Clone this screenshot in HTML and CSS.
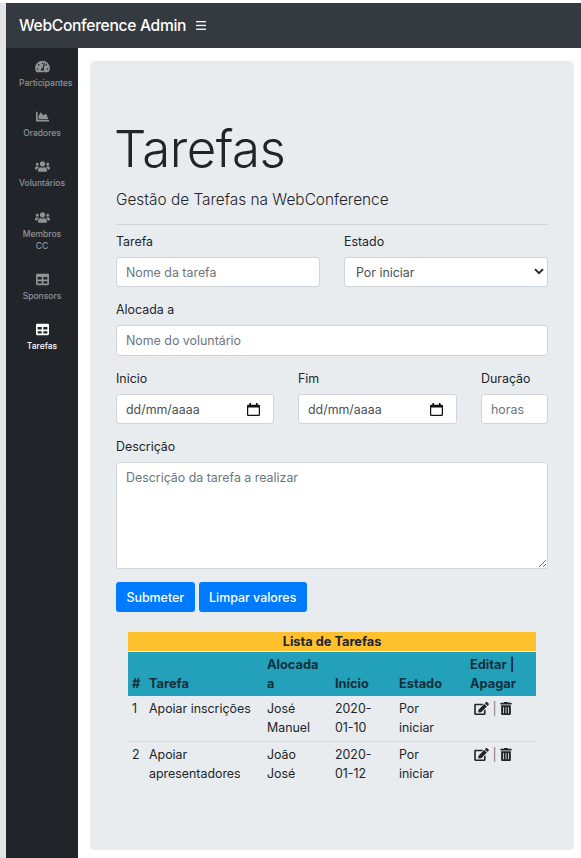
FILE: index.html
```html
<!DOCTYPE html>
<html lang="pt">
<head>
<meta charset="utf-8">
<title>WebConference Admin</title>
<link rel="stylesheet" href="styles.css">
</head>
<body>
<svg class="defs" aria-hidden="true">
  <symbol id="i-tach" viewBox="0 0 576 512"><path d="M288 32C128.94 32 0 160.94 0 320c0 52.8 14.25 102.26 39.06 144.8 5.61 9.62 16.3 15.2 27.44 15.2h443c11.14 0 21.83-5.58 27.44-15.2C561.75 422.26 576 372.8 576 320c0-159.06-128.94-288-288-288zm0 64c14.71 0 26.58 10.13 30.32 23.65-1.11 2.26-2.64 4.23-3.45 6.67l-9.22 27.67c-5.13 3.49-10.97 6.01-17.64 6.01-17.67 0-32-14.33-32-32S270.33 96 288 96zM96 384c-17.67 0-32-14.33-32-32s14.33-32 32-32 32 14.33 32 32-14.33 32-32 32zm48-160c-17.67 0-32-14.33-32-32s14.33-32 32-32 32 14.33 32 32-14.33 32-32 32zm246.77-72.41l-61.33 184C343.13 347.33 352 364.54 352 384c0 11.72-3.38 22.55-8.88 32H232.88c-5.5-9.45-8.88-20.28-8.88-32 0-33.94 26.5-61.43 59.9-63.59l61.34-184.01c4.17-12.56 17.73-19.45 30.36-15.17 12.57 4.19 19.35 17.79 15.17 30.36zm14.66 57.2l15.52-46.55c3.47-1.29 7.13-2.23 11.05-2.23 17.67 0 32 14.33 32 32s-14.33 32-32 32c-11.38-.01-20.89-6.28-26.57-15.22zM480 384c-17.67 0-32-14.33-32-32s14.33-32 32-32 32 14.33 32 32-14.33 32-32 32z"/></symbol>
  <symbol id="i-chart" viewBox="0 0 512 512"><path d="M500 384c6.6 0 12 5.4 12 12v40c0 6.6-5.4 12-12 12H12c-6.6 0-12-5.4-12-12V76c0-6.6 5.4-12 12-12h40c6.6 0 12 5.4 12 12v308h436zM372.7 159.5L288 216l-85.3-113.7c-5.1-6.8-15.5-6.3-19.9 1L96 248v104h384l-67.8-179.3c-4.7-12.4-23.4-19.6-39.5-13.2z"/></symbol>
  <symbol id="i-users" viewBox="0 0 640 512"><path d="M96 224c35.3 0 64-28.7 64-64s-28.7-64-64-64-64 28.7-64 64 28.7 64 64 64zm448 0c35.3 0 64-28.7 64-64s-28.7-64-64-64-64 28.7-64 64 28.7 64 64 64zm32 32h-64c-17.6 0-33.5 7.1-45.1 18.6 40.3 22.1 68.9 62 75.1 109.4h66c17.7 0 32-14.3 32-32v-32c0-35.3-28.7-64-64-64zm-256 0c61.9 0 112-50.1 112-112S381.9 32 320 32 208 82.1 208 144s50.1 112 112 112zm76.8 32h-8.3c-20.8 10-43.9 16-68.5 16s-47.6-6-68.5-16h-8.3C179.6 288 128 339.6 128 403.2V432c0 26.5 21.5 48 48 48h288c26.5 0 48-21.5 48-48v-28.8c0-63.6-51.6-115.2-115.2-115.2zm-223.7-13.4C161.5 263.1 145.6 256 128 256H64c-35.3 0-64 28.7-64 64v32c0 17.7 14.3 32 32 32h65.9c6.3-47.4 34.9-87.3 75.2-109.4z"/></symbol>
  <symbol id="i-table" viewBox="0 0 512 512"><path d="M464 32H48C21.49 32 0 53.49 0 80v352c0 26.51 21.49 48 48 48h416c26.51 0 48-21.49 48-48V80c0-26.51-21.49-48-48-48zM224 416H64v-96h160v96zm0-160H64v-96h160v96zm224 160H288v-96h160v96zm0-160H288v-96h160v96z"/></symbol>
  <symbol id="i-edit" viewBox="0 0 576 512"><path d="M402.6 83.2l90.2 90.2c3.8 3.8 3.8 10 0 13.8L274.4 405.6l-92.8 10.3c-12.4 1.4-22.9-9.1-21.5-21.5l10.3-92.8L388.8 83.2c3.8-3.8 10-3.8 13.8 0zm162-22.9l-48.8-48.8c-15.2-15.2-39.9-15.2-55.2 0l-35.4 35.4c-3.8 3.8-3.8 10 0 13.8l90.2 90.2c3.8 3.8 10 3.8 13.8 0l35.4-35.4c15.2-15.3 15.2-40 0-55.2zM384 346.2V448H64V128h229.8c3.2 0 6.2-1.3 8.5-3.5l40-40c7.6-7.6 2.2-20.5-8.5-20.5H48C21.5 64 0 85.5 0 112v352c0 26.5 21.5 48 48 48h352c26.5 0 48-21.5 48-48V306.2c0-10.7-12.9-16-20.5-8.5l-40 40c-2.2 2.3-3.5 5.3-3.5 8.5z"/></symbol>
  <symbol id="i-trash" viewBox="0 0 448 512"><path d="M32 464a48 48 0 0 0 48 48h288a48 48 0 0 0 48-48V128H32zm272-256a16 16 0 0 1 32 0v224a16 16 0 0 1-32 0zm-96 0a16 16 0 0 1 32 0v224a16 16 0 0 1-32 0zm-96 0a16 16 0 0 1 32 0v224a16 16 0 0 1-32 0zM432 32H312l-9.4-18.7A24 24 0 0 0 281.1 0H166.8a23.72 23.72 0 0 0-21.4 13.3L136 32H16A16 16 0 0 0 0 48v32a16 16 0 0 0 16 16h416a16 16 0 0 0 16-16V48a16 16 0 0 0-16-16z"/></symbol>
  <symbol id="i-cal" viewBox="0 0 16 16"><path d="M3 0h2v2h6V0h2v2h1.500A1.500 1.500 0 0 1 16 3.500v11a1.500 1.500 0 0 1-1.500 1.500h-13A1.500 1.500 0 0 1 0 14.500v-11A1.500 1.500 0 0 1 1.500 2H3zM1.500 5.500v9h13v-9z"/></symbol>
</svg>

<div class="app">
  <header class="navbar">
    <span class="brand">WebConference Admin</span>
    <svg class="burger" viewBox="0 0 10 9" aria-hidden="true"><rect width="10" height="1.300" y="0"/><rect width="10" height="1.300" y="3.800"/><rect width="10" height="1.300" y="7.600"/></svg>
  </header>
  <div class="body-row">
    <nav class="sidebar">
      <a class="side-link"><svg class="side-icon"><use href="#i-tach"/></svg><span class="side-text">Participantes</span></a>
      <a class="side-link"><svg class="side-icon"><use href="#i-chart"/></svg><span class="side-text">Oradores</span></a>
      <a class="side-link"><svg class="side-icon"><use href="#i-users"/></svg><span class="side-text">Voluntários</span></a>
      <a class="side-link"><svg class="side-icon"><use href="#i-users"/></svg><span class="side-text">Membros<br>CC</span></a>
      <a class="side-link"><svg class="side-icon"><use href="#i-table"/></svg><span class="side-text">Sponsors</span></a>
      <a class="side-link active"><svg class="side-icon"><use href="#i-table"/></svg><span class="side-text">Tarefas</span></a>
    </nav>
    <main class="content">
      <section class="jumbotron">
        <h1 class="title">Tarefas</h1>
        <p class="lead">Gestão de Tarefas na WebConference</p>
        <hr class="rule">
        <form class="form">
          <div class="row two">
            <div class="field"><label class="label">Tarefa</label><input class="control" placeholder="Nome da tarefa"></div>
            <div class="field"><label class="label">Estado</label>
              <div class="select-wrap">
                <select class="control select"><option>Por iniciar</option></select>
                <svg class="chevron" viewBox="0 0 10 7" aria-hidden="true"><path d="M1 1.200l4 4 4-4" fill="none" stroke="#212529" stroke-width="1.900"/></svg>
              </div>
            </div>
          </div>
          <div class="field"><label class="label">Alocada a</label><input class="control tall" placeholder="Nome do voluntário"></div>
          <div class="row dates">
            <div class="field"><label class="label">Inicio</label>
              <div class="control date"><span>dd/mm/aaaa</span><svg class="cal"><use href="#i-cal"/></svg></div>
            </div>
            <div class="field"><label class="label">Fim</label>
              <div class="control date"><span>dd/mm/aaaa</span><svg class="cal"><use href="#i-cal"/></svg></div>
            </div>
            <div class="field"><label class="label">Duração</label><input class="control" placeholder="horas"></div>
          </div>
          <div class="field"><label class="label">Descrição</label><textarea class="control area" placeholder="Descrição da tarefa a realizar"></textarea></div>
          <div class="buttons">
            <button type="button" class="btn">Submeter</button>
            <button type="button" class="btn">Limpar valores</button>
          </div>
        </form>
        <table class="table">
          <colgroup><col class="c1"><col class="c2"><col class="c3"><col class="c4"><col class="c5"><col class="c6"></colgroup>
          <thead>
            <tr class="caption-row"><th colspan="6">Lista de Tarefas</th></tr>
            <tr class="head-row"><th>#</th><th>Tarefa</th><th class="mid">Alocada a</th><th class="mid">Início</th><th class="narrow">Estado</th><th class="narrow">Editar | Apagar</th></tr>
          </thead>
          <tbody>
            <tr><td>1</td><td>Apoiar inscrições</td><td class="mid">José Manuel</td><td class="mid">2020-01-10</td><td class="narrow">Por iniciar</td><td class="actions narrow"><svg class="act edit"><use href="#i-edit"/></svg><span class="sep">|</span><svg class="act trash"><use href="#i-trash"/></svg></td></tr>
            <tr><td>2</td><td>Apoiar apresentadores</td><td class="mid">João José</td><td class="mid">2020-01-12</td><td class="narrow">Por iniciar</td><td class="actions narrow"><svg class="act edit"><use href="#i-edit"/></svg><span class="sep">|</span><svg class="act trash"><use href="#i-trash"/></svg></td></tr>
          </tbody>
        </table>
      </section>
    </main>
  </div>
</div>
</body>
</html>
```

FILE: styles.css
```css
* { box-sizing: border-box; }
html, body { margin: 0; height: 100%; }
body {
  background: #fff;
  color: #212529;
  font-family: Inter, "Liberation Sans", sans-serif;
  font-size: 12.400px;
  overflow: hidden;
}
.defs { display: none; }
.app {
  height: 858px;
  margin-top: 3px;
  padding-left: 6px;
  background: linear-gradient(90deg, #e4e4e4, #c4c4c4);
  display: flex;
  flex-direction: column;
}
.navbar {
  height: 45px;
  flex: none;
  background: #343a40;
  display: flex;
  align-items: center;
  padding-left: 13px;
  gap: 10px;
}
.brand { color: #fff; font-size: 15.600px; font-weight: 500; letter-spacing: -0.300px; }
.burger { width: 10px; height: 9px; fill: #fff; }
.body-row { flex: 1; display: flex; min-height: 0; background: #fff; }
.sidebar {
  width: 72px;
  flex: none;
  background: #212529;
  padding-top: 12px;
  display: flex;
  flex-direction: column;
  gap: 21.200px;
}
.side-link {
  display: flex;
  flex-direction: column;
  align-items: center;
  color: rgba(255, 255, 255, .5);
  font-size: 8.500px;
  font-weight: 500;
  line-height: 12px;
  gap: 4px;
}
.side-link.active { color: #fff; }
.side-icon { width: 15px; height: 13px; fill: currentColor; }
.side-text { display: block; width: 46px; text-align: center; white-space: nowrap; }
.content { flex: 1; padding: 13px 7px 8px 12px; min-width: 0; }
.jumbotron {
  height: 789px;
  background: #e9ecef;
  border-radius: 5px;
  padding: 52px 26px 0;
}
.title { margin: 0 0 0 -2px; font-size: 51px; font-weight: 300; line-height: 72px; letter-spacing: -0.500px; }
.lead { margin: 3px 0 0; font-size: 15.400px; font-weight: 300; line-height: 24px; }
.rule { margin: 12px 0 7px; border: 0; border-top: 1px solid #d0d3d6; }
.form { display: flex; flex-direction: column; gap: 13px; }
.row { display: grid; gap: 24px; }
.row.two { grid-template-columns: 1fr 1fr; }
.row.dates { grid-template-columns: 158px 159px 67px; }
.field { display: flex; flex-direction: column; min-width: 0; }
.label { font-size: 12.400px; line-height: 19px; margin-bottom: 6px; }
.control {
  width: 100%;
  height: 30px;
  border: 1px solid #ced4da;
  border-radius: 3px;
  background: #fff;
  color: #495057;
  font: 400 12.400px Inter, "Liberation Sans", sans-serif;
  padding: 0 9px;
  display: block;
}
.control::placeholder { color: #6c757d; opacity: 1; }
.tall { height: 31px; }
.select-wrap { position: relative; }
.select { appearance: none; padding-left: 11px; }
.chevron { position: absolute; right: 4px; top: 11px; width: 10px; height: 7px; }
.date { display: flex; align-items: center; justify-content: space-between; padding-right: 13px; }
.cal { width: 13px; height: 13px; fill: #111; }
.area { height: 107px; padding-top: 7px; resize: vertical; }
.buttons { display: flex; gap: 4px; }
.btn {
  height: 30px;
  padding: 0 10.500px;
  background: #007bff;
  color: #fff;
  border: 0;
  border-radius: 3px;
  font: 500 12.400px Inter, "Liberation Sans", sans-serif;
}
.table {
  width: 408px;
  margin: 20px 0 0 12px;
  border-collapse: collapse;
  table-layout: fixed;
  line-height: 19px;
}
.c1 { width: 17px; } .c2 { width: 118px; } .c3 { width: 68px; }
.c4 { width: 64px; } .c5 { width: 71px; } .c6 { width: 70px; }
.table th, .table td { padding: 3px 4px; text-align: left; vertical-align: top; font-weight: 400; }
.table th.mid, .table td.mid { padding-right: 12px; }
.table th.narrow, .table td.narrow { padding-right: 20px; }
.table th { font-size: 12.800px; }
.table .caption-row th { background: #ffc02e; text-align: center; font-weight: 700; padding: 0; height: 19px; line-height: 19px; border-bottom: 1px solid #e9ecef; }
.table .head-row th { background: #23a1bb; color: #12303c; font-weight: 700; vertical-align: bottom; }
.table tbody td { height: 45px; }
.table tbody tr + tr td { border-top: 1px solid #d8dbde; }
.table td.actions { white-space: nowrap; text-align: center; }
.act { height: 13px; fill: #212529; vertical-align: -2px; }
.edit { width: 15px; }
.trash { width: 12px; }
.sep { margin: 0 3px; color: #777; }
```
